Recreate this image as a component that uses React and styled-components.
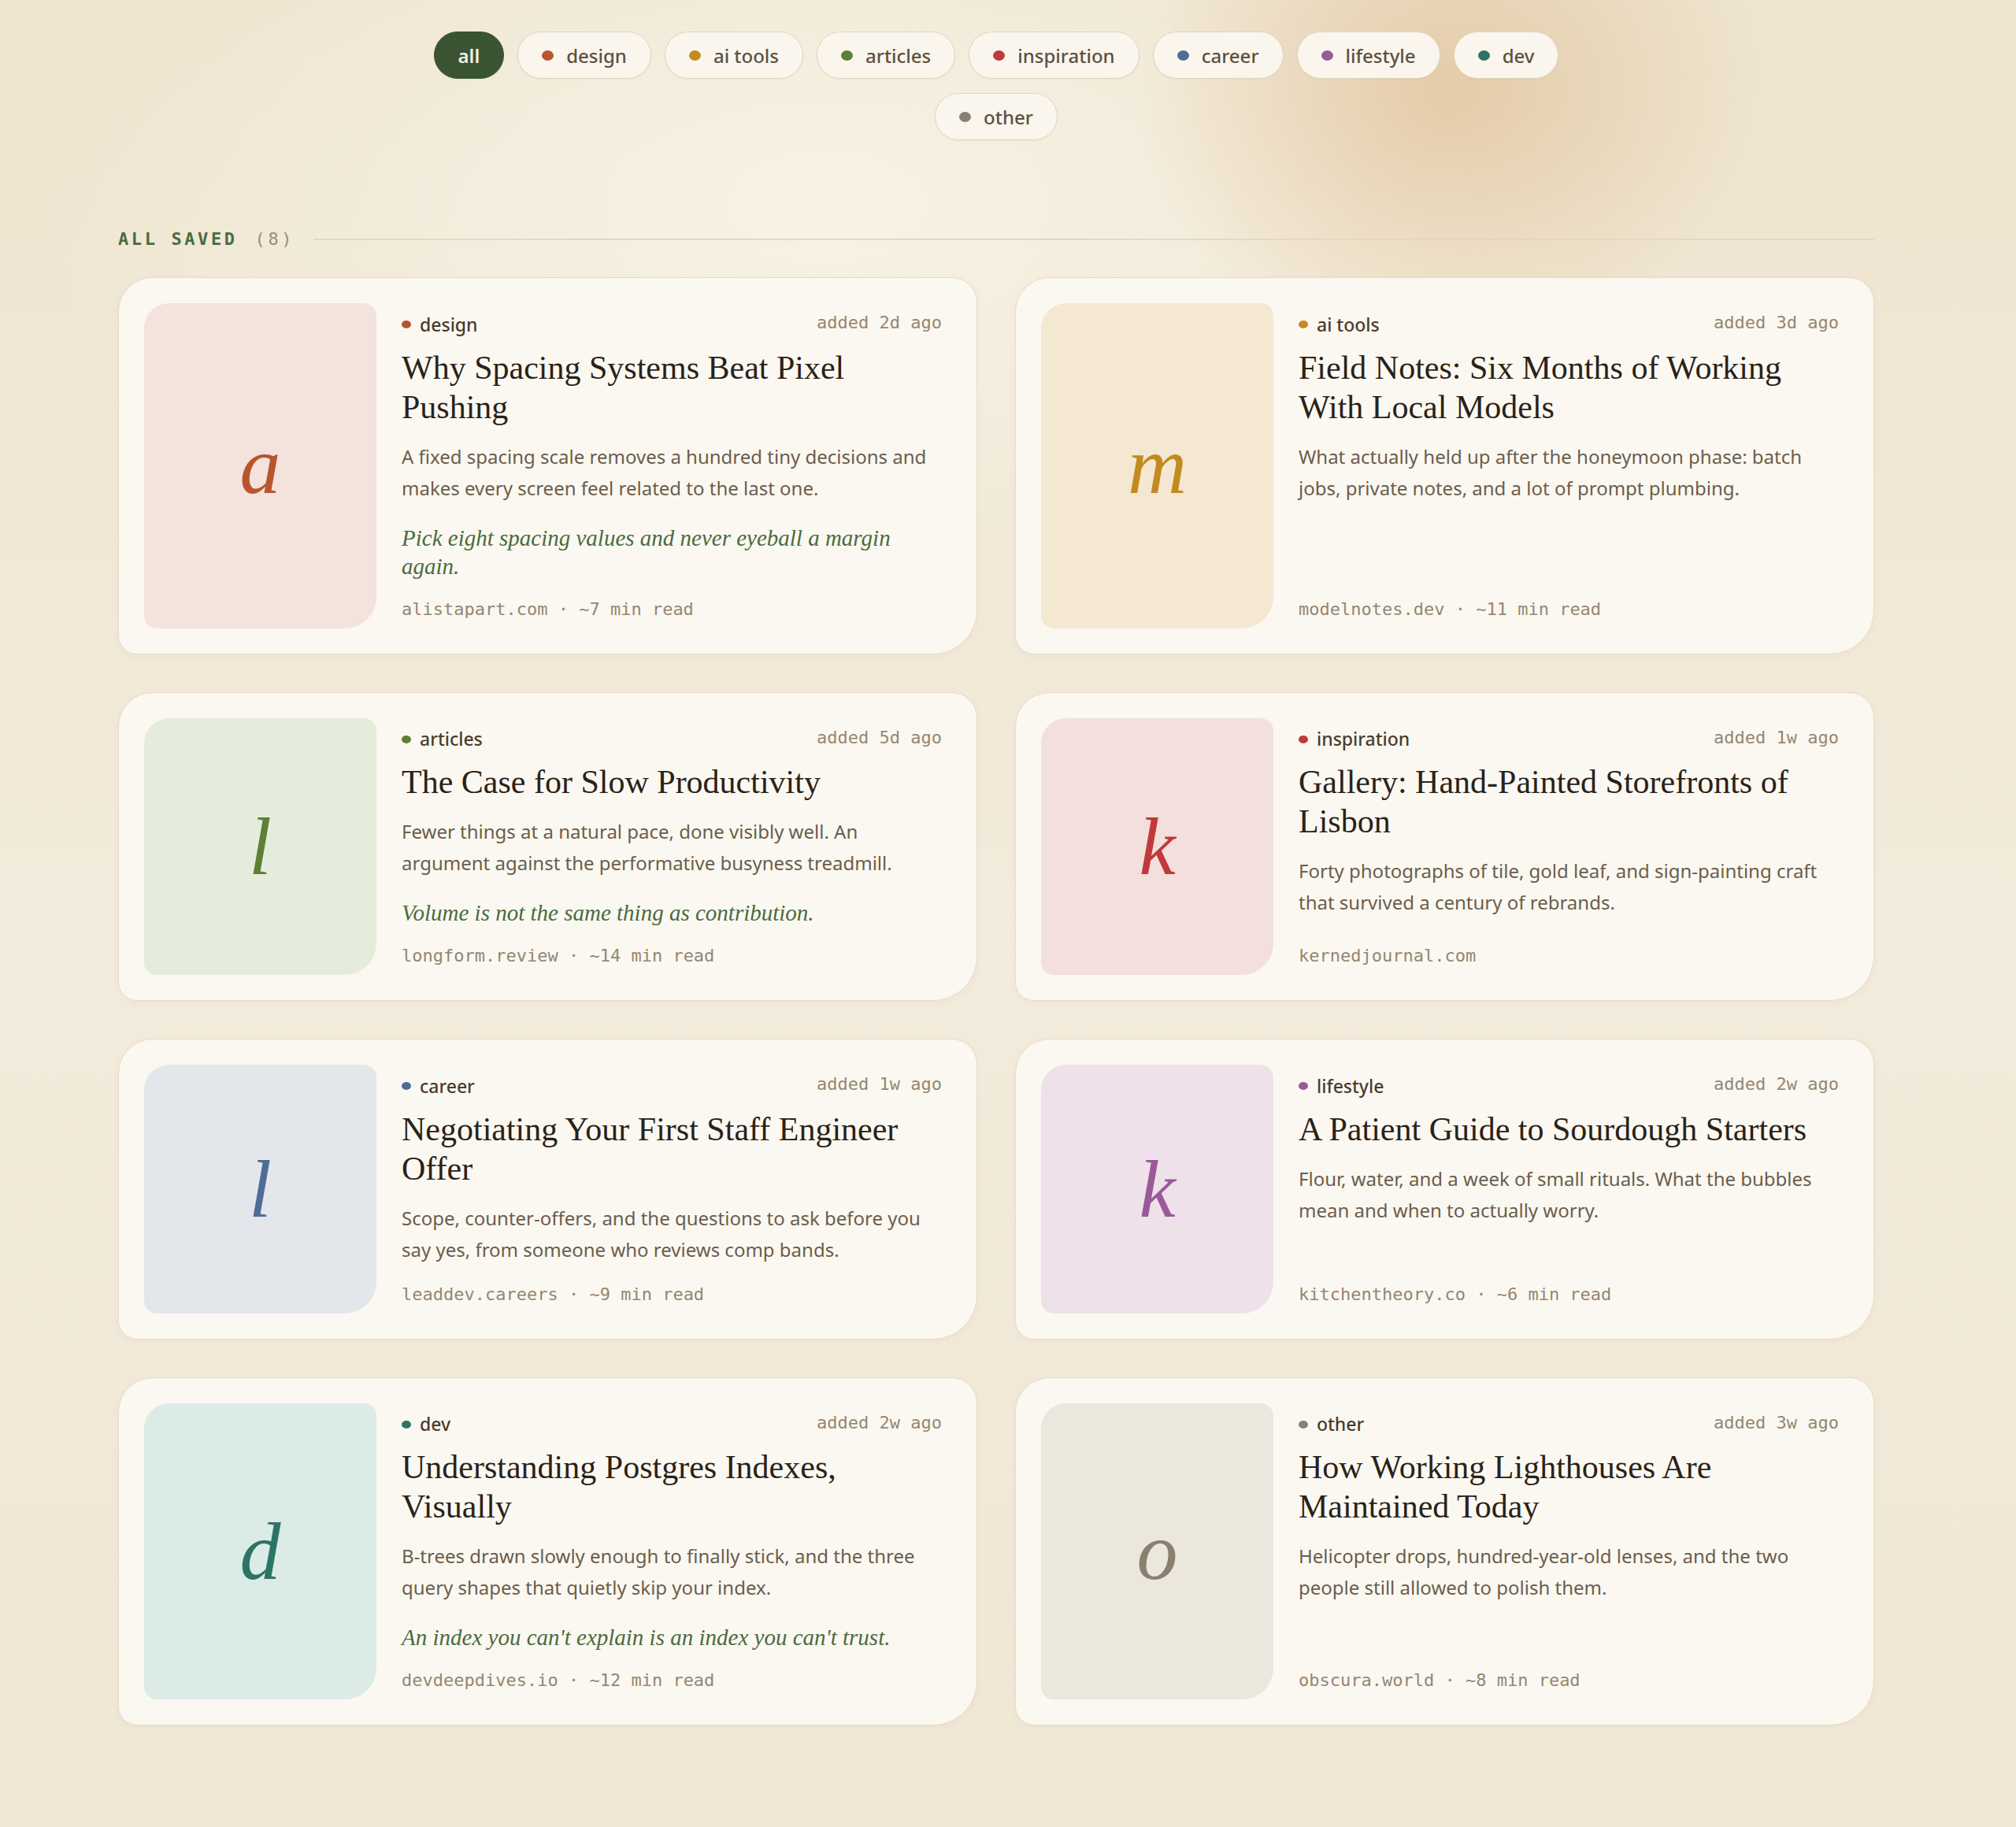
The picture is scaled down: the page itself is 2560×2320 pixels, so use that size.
import React, { useState } from 'react';
import styled, { createGlobalStyle } from 'styled-components';

const categories = [
  { id: 'design', label: 'design', dot: '#b8552f', tint: '#f3e3dc' },
  { id: 'ai', label: 'ai tools', dot: '#c48a22', tint: '#f4e8d3' },
  { id: 'articles', label: 'articles', dot: '#5e7f36', tint: '#e6ecdb' },
  { id: 'inspiration', label: 'inspiration', dot: '#c0393b', tint: '#f3dfdc' },
  { id: 'career', label: 'career', dot: '#4f6d94', tint: '#e3e7ec' },
  { id: 'lifestyle', label: 'lifestyle', dot: '#9a5a9a', tint: '#efe1ea' },
  { id: 'dev', label: 'dev', dot: '#2e7466', tint: '#dbebe5' },
  { id: 'other', label: 'other', dot: '#8a8070', tint: '#ebe7dc' },
];

const catById = Object.fromEntries(categories.map((c) => [c.id, c]));

const saved = [
  {
    cat: 'design',
    added: '2d',
    letter: 'a',
    title: 'Why Spacing Systems Beat Pixel Pushing',
    desc: 'A fixed spacing scale removes a hundred tiny decisions and makes every screen feel related to the last one.',
    quote: 'Pick eight spacing values and never eyeball a margin again.',
    source: 'alistapart.com',
    read: '~7 min read',
  },
  {
    cat: 'ai',
    added: '3d',
    letter: 'm',
    title: 'Field Notes: Six Months of Working With Local Models',
    desc: 'What actually held up after the honeymoon phase: batch jobs, private notes, and a lot of prompt plumbing.',
    source: 'modelnotes.dev',
    read: '~11 min read',
  },
  {
    cat: 'articles',
    added: '5d',
    letter: 'l',
    title: 'The Case for Slow Productivity',
    desc: 'Fewer things at a natural pace, done visibly well. An argument against the performative busyness treadmill.',
    quote: 'Volume is not the same thing as contribution.',
    source: 'longform.review',
    read: '~14 min read',
  },
  {
    cat: 'inspiration',
    added: '1w',
    letter: 'k',
    title: 'Gallery: Hand-Painted Storefronts of Lisbon',
    desc: 'Forty photographs of tile, gold leaf, and sign-painting craft that survived a century of rebrands.',
    source: 'kernedjournal.com',
  },
  {
    cat: 'career',
    added: '1w',
    letter: 'l',
    title: 'Negotiating Your First Staff Engineer Offer',
    desc: 'Scope, counter-offers, and the questions to ask before you say yes, from someone who reviews comp bands.',
    source: 'leaddev.careers',
    read: '~9 min read',
  },
  {
    cat: 'lifestyle',
    added: '2w',
    letter: 'k',
    title: 'A Patient Guide to Sourdough Starters',
    desc: 'Flour, water, and a week of small rituals. What the bubbles mean and when to actually worry.',
    source: 'kitchentheory.co',
    read: '~6 min read',
  },
  {
    cat: 'dev',
    added: '2w',
    letter: 'd',
    title: 'Understanding Postgres Indexes, Visually',
    desc: 'B-trees drawn slowly enough to finally stick, and the three query shapes that quietly skip your index.',
    quote: "An index you can't explain is an index you can't trust.",
    source: 'devdeepdives.io',
    read: '~12 min read',
  },
  {
    cat: 'other',
    added: '3w',
    letter: 'o',
    title: 'How Working Lighthouses Are Maintained Today',
    desc: 'Helicopter drops, hundred-year-old lenses, and the two people still allowed to polish them.',
    source: 'obscura.world',
    read: '~8 min read',
  },
];

const GlobalStyle = createGlobalStyle`
  body {
    margin: 0;
    font-family: "Noto Sans", "Open Sans", sans-serif;
    background-color: #f0e8d6;
    background-image:
      radial-gradient(ellipse 400px 330px at 1840px 120px, rgba(222, 186, 142, 0.62), rgba(222, 186, 142, 0) 100%),
      radial-gradient(ellipse 1000px 520px at 1050px 260px, rgba(250, 245, 233, 0.85), rgba(250, 245, 233, 0) 100%),
      linear-gradient(180deg, #eee4cf 0%, #f3ebdb 45%, #efe6d3 100%);
    background-repeat: no-repeat;
  }
`;

const Page = styled.div`
  padding: 40px 180px 440px 150px;
`;

const Filters = styled.nav`
  display: flex;
  flex-wrap: wrap;
  justify-content: center;
  gap: 18px 17px;
  max-width: 1520px;
  margin: 0 auto;
`;

const Pill = styled.button`
  display: flex;
  align-items: center;
  gap: 16px;
  height: 60px;
  padding: 0 30px;
  border-radius: 999px;
  border: 1.5px solid ${(p) => (p.$active ? '#3a5433' : '#e0d5bf')};
  background: ${(p) => (p.$active ? '#3a5433' : '#faf6ee')};
  color: ${(p) => (p.$active ? '#f3eee2' : '#5e5040')};
  font-family: "Noto Sans", sans-serif;
  font-size: 24px;
  font-weight: ${(p) => (p.$active ? 600 : 500)};
  cursor: pointer;
  box-shadow: 0 1px 2px rgba(120, 95, 60, 0.06);
`;

const Dot = styled.span`
  width: ${(p) => (p.$small ? '12px' : '15px')};
  height: ${(p) => (p.$small ? '10px' : '13px')};
  border-radius: 50%;
  background: ${(p) => p.$color};
  flex-shrink: 0;
`;

const Main = styled.main`
  max-width: 2230px;
  margin: 0 auto;
`;

const SectionHead = styled.div`
  display: flex;
  align-items: center;
  gap: 24px;
  margin: 110px 0 32px;
  font-family: "DejaVu Sans Mono", monospace;
  font-size: 22px;
  line-height: 32px;
  letter-spacing: 3.6px;
`;

const SectionLabel = styled.span`
  color: #4a6b3f;
  font-weight: 700;
`;

const Count = styled.span`
  color: #9c8e76;
  margin-left: -2px;
`;

const Rule = styled.span`
  flex: 1;
  height: 2px;
  background: #e2d8c4;
`;

const Grid = styled.div`
  display: grid;
  grid-template-columns: 1fr 1fr;
  gap: 48px 48px;
`;

const Card = styled.article`
  display: flex;
  gap: 32px;
  padding: 32px 44px 32px 32px;
  background: #fbf8f1;
  border: 1px solid #e5dcc8;
  border-radius: 44px 32px 56px 24px;
  box-shadow: 0 2px 8px rgba(130, 100, 60, 0.05);
`;

const Thumb = styled.div`
  flex: 0 0 295px;
  display: flex;
  align-items: center;
  justify-content: center;
  background: ${(p) => p.$tint};
  border-radius: 32px 16px 40px 16px;
  color: ${(p) => p.$color};
  font-family: "Liberation Serif", "Times New Roman", serif;
  font-style: italic;
  font-size: 104px;
  line-height: 1;
`;

const Body = styled.div`
  flex: 1;
  min-width: 0;
  display: flex;
  flex-direction: column;
  padding: 8px 0 7px;
`;

const MetaRow = styled.div`
  display: flex;
  justify-content: space-between;
  align-items: baseline;
  line-height: 33px;
`;

const Category = styled.span`
  display: flex;
  align-items: center;
  gap: 11px;
  font-size: 23px;
  font-weight: 500;
  color: #4a3c2e;
`;

const Mono = styled.span`
  font-family: "DejaVu Sans Mono", "Liberation Mono", monospace;
  font-size: 22px;
  color: #958670;
  white-space: nowrap;
`;

const Title = styled.h3`
  margin: 13px 0 0;
  font-family: "Liberation Serif", "Times New Roman", serif;
  font-size: 42px;
  line-height: 50px;
  font-weight: 400;
  color: #2a2218;
`;

const Desc = styled.p`
  margin: 18px 0 0;
  font-size: 24px;
  line-height: 40px;
  color: #6b5d4c;
`;

const Quote = styled.p`
  margin: 25px 0 0;
  font-family: "Liberation Serif", "Times New Roman", serif;
  font-style: italic;
  font-size: 29px;
  line-height: 36px;
  color: #4a6b3f;
`;

const Footer = styled.div`
  margin-top: auto;
  padding-top: 21px;
  line-height: 31px;
`;

const SavedCard = ({ item }) => {
  const cat = catById[item.cat];
  return (
    <Card>
      <Thumb $tint={cat.tint} $color={cat.dot}>{item.letter}</Thumb>
      <Body>
        <MetaRow>
          <Category>
            <Dot $small $color={cat.dot} />
            {cat.label}
          </Category>
          <Mono>added {item.added} ago</Mono>
        </MetaRow>
        <Title>{item.title}</Title>
        <Desc>{item.desc}</Desc>
        {item.quote && <Quote>{item.quote}</Quote>}
        <Footer>
          <Mono>
            {item.source}
            {item.read && ` · ${item.read}`}
          </Mono>
        </Footer>
      </Body>
    </Card>
  );
};

const App = () => {
  const [active, setActive] = useState('all');

  return (
    <Page>
      <GlobalStyle />
      <Filters>
        <Pill $active={active === 'all'} onClick={() => setActive('all')}>all</Pill>
        {categories.map((c) => (
          <Pill key={c.id} $active={active === c.id} onClick={() => setActive(c.id)}>
            <Dot $color={c.dot} />
            {c.label}
          </Pill>
        ))}
      </Filters>
      <Main>
        <SectionHead>
          <SectionLabel>ALL SAVED</SectionLabel>
          <Count>(8)</Count>
          <Rule />
        </SectionHead>
        <Grid>
          {saved.map((item, i) => (
            <SavedCard key={i} item={item} />
          ))}
        </Grid>
      </Main>
    </Page>
  );
};

export default App;
